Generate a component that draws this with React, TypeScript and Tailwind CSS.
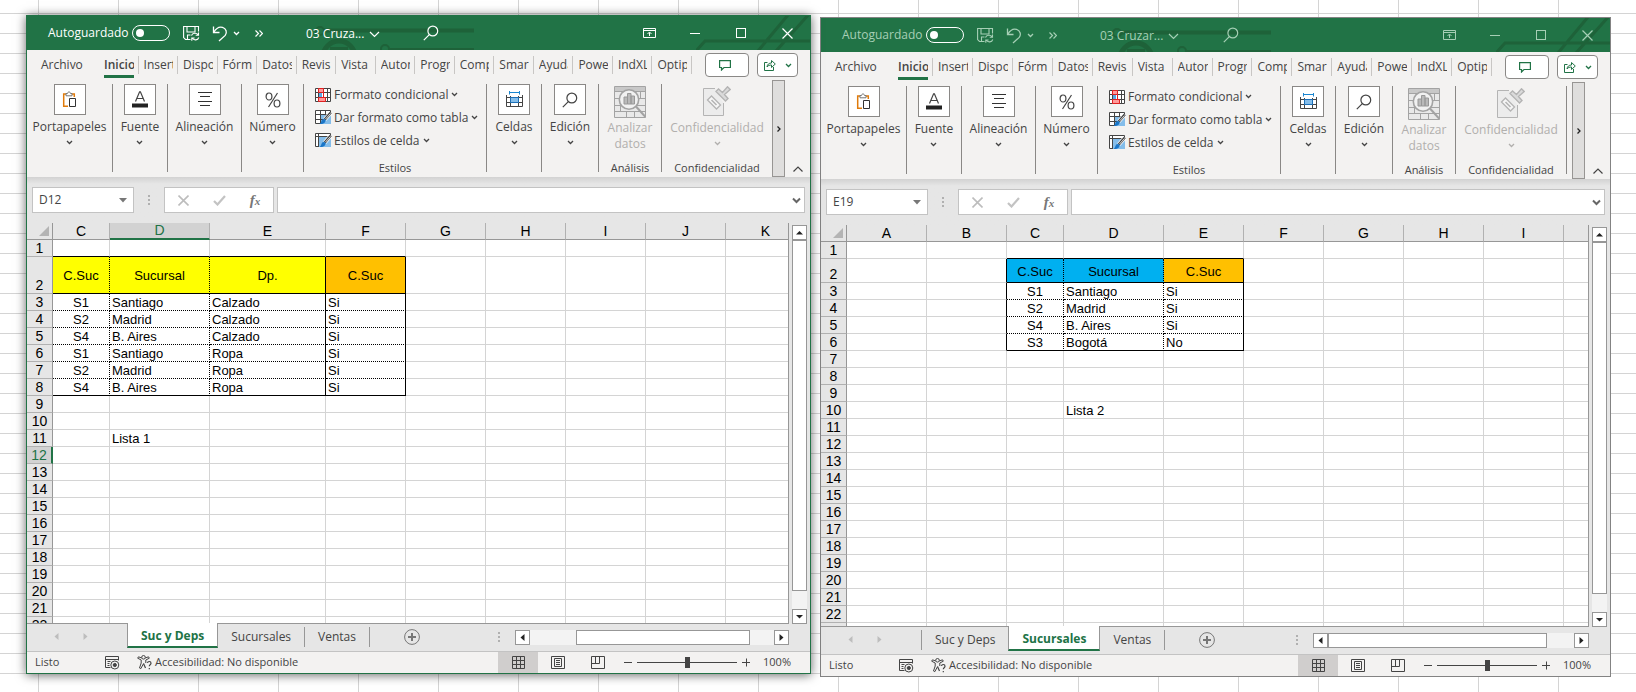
import React from "react";

type Column = { name: string; width: number };

type Block = {
  firstCol: number;
  headers: string[];
  headerColors: string[];
  solidRight: boolean[];
  rows: string[][];
};

type Book = {
  title: string;
  active: boolean;
  cellRef: string;
  columns: Column[];
  rowCount: number;
  headerHeight: number;
  block: Block;
  note: { row: number; col: number; text: string };
  selected?: { row: number; col: number };
  sheets: string[];
  currentSheet: string;
  thumb: { left: number; width: number };
};

const ribbonTabs = [
  "Inicio",
  "Insert",
  "Dispo",
  "Fórm",
  "Datos",
  "Revis",
  "Vista",
  "Autom",
  "Progr",
  "Comp",
  "Smar",
  "Ayuda",
  "Powe",
  "IndXL",
  "Optip",
];

const books: Book[] = [
  {
    title: "03 Cruza...",
    active: true,
    cellRef: "D12",
    columns: [
      { name: "C", width: 57 },
      { name: "D", width: 100 },
      { name: "E", width: 116 },
      { name: "F", width: 80 },
      { name: "G", width: 80 },
      { name: "H", width: 80 },
      { name: "I", width: 80 },
      { name: "J", width: 80 },
      { name: "K", width: 80 },
    ],
    rowCount: 22,
    headerHeight: 37,
    block: {
      firstCol: 0,
      headers: ["C.Suc", "Sucursal", "Dp.", "C.Suc"],
      headerColors: ["bg-[#ffff00]", "bg-[#ffff00]", "bg-[#ffff00]", "bg-[#ffc000]"],
      solidRight: [false, false, true, true],
      rows: [
        ["S1", "Santiago", "Calzado", "Si"],
        ["S2", "Madrid", "Calzado", "Si"],
        ["S4", "B. Aires", "Calzado", "Si"],
        ["S1", "Santiago", "Ropa", "Si"],
        ["S2", "Madrid", "Ropa", "Si"],
        ["S4", "B. Aires", "Ropa", "Si"],
      ],
    },
    note: { row: 11, col: 1, text: "Lista 1" },
    selected: { row: 12, col: 1 },
    sheets: ["Suc y Deps", "Sucursales", "Ventas"],
    currentSheet: "Suc y Deps",
    thumb: { left: 19, width: 71 },
  },
  {
    title: "03 Cruzar...",
    active: false,
    cellRef: "E19",
    columns: [
      { name: "A", width: 80 },
      { name: "B", width: 80 },
      { name: "C", width: 57 },
      { name: "D", width: 100 },
      { name: "E", width: 80 },
      { name: "F", width: 80 },
      { name: "G", width: 80 },
      { name: "H", width: 80 },
      { name: "I", width: 80 },
      { name: "", width: 80 },
    ],
    rowCount: 23,
    headerHeight: 24,
    block: {
      firstCol: 2,
      headers: ["C.Suc", "Sucursal", "C.Suc"],
      headerColors: ["bg-[#00b0f0]", "bg-[#00b0f0]", "bg-[#ffc000]"],
      solidRight: [false, false, true],
      rows: [
        ["S1", "Santiago", "Si"],
        ["S2", "Madrid", "Si"],
        ["S4", "B. Aires", "Si"],
        ["S3", "Bogotá", "No"],
      ],
    },
    note: { row: 10, col: 3, text: "Lista 2" },
    sheets: ["Suc y Deps", "Sucursales", "Ventas"],
    currentSheet: "Sucursales",
    thumb: { left: 0, width: 89 },
  },
];

/* ---------- icons ---------- */

const Caret: React.FC<{ className?: string }> = ({ className = "" }) => (
  <svg width="7" height="5" viewBox="0 0 7 5" fill="none" stroke="currentColor" strokeWidth="1.3" className={`shrink-0 ${className}`}>
    <path d="M1 1l2.5 2.5L6 1" />
  </svg>
);

const WideCaret: React.FC = () => (
  <svg width="11" height="7" viewBox="0 0 11 7" fill="none" stroke="currentColor" strokeWidth="1.2">
    <path d="M1 1l4.5 4.5L10 1" />
  </svg>
);

const SaveIcon: React.FC = () => (
  <svg width="17" height="17" viewBox="0 0 17 17" fill="none" stroke="currentColor" strokeWidth="1.1">
    <path d="M7.5 14.5H2.5L.6 12.6V1.5h14.9v5" />
    <path d="M4 1.5v5.5h8V1.5M4.5 14.5v-4.5h3" />
    <path d="M8.5 10.5c1-2.6 5-3 6.600-.6M15.500 7.500v2.800h-2.800M15.800 12.500c-1 2.800-4.800 3.200-6.500.8M8.800 15.800v-2.800h2.800" />
  </svg>
);

const UndoIcon: React.FC = () => (
  <svg width="16" height="17" viewBox="0 0 16 17" fill="none" stroke="currentColor" strokeWidth="1.3">
    <path d="M1.500 1.500v6h6" />
    <path d="M1.700 7.300C4 3.500 7.500 1.500 10.500 2.400c3.800 1.100 4.900 5.100 2.700 8L7 16" />
  </svg>
);

const SearchIcon: React.FC = () => (
  <svg width="16" height="16" viewBox="0 0 16 16" fill="none" stroke="currentColor" strokeWidth="1.2">
    <circle cx="9.800" cy="6" r="4.900" />
    <path d="M6.300 9.600L.800 15.200" />
  </svg>
);

const PasteIcon: React.FC = () => (
  <svg width="16" height="17" viewBox="0 0 16 17" fill="none">
    <path d="M4 3H1.700v12.300H6M10 3h2.300v3" stroke="#e07b0b" strokeWidth="1.500" />
    <path d="M4 4.800V2.500h1.500C5.700.4 8.300.4 8.500 2.500H10v2.300z" fill="#fff" stroke="#777" />
    <path d="M7.500 7.500h6v8h-6z" fill="#fff" stroke="#333" />
  </svg>
);

const FontIcon: React.FC = () => (
  <svg width="18" height="17" viewBox="0 0 18 17" fill="none">
    <path d="M4.500 10.500L8.600.8h.8l4.100 9.700M6 7.500h6" stroke="#444" strokeWidth="1.200" />
    <path d="M1 12.500h16v4H1z" fill="#222" />
  </svg>
);

const AlignIcon: React.FC = () => (
  <svg width="14" height="15" viewBox="0 0 14 15" stroke="#333">
    <path d="M0 .5h14M2 4.500h10M0 9.500h14M2 13.500h10" />
  </svg>
);

const PercentIcon: React.FC = () => (
  <svg width="16" height="16" viewBox="0 0 16 16" fill="none" stroke="#444" strokeWidth="1.200">
    <ellipse cx="4" cy="4.500" rx="2.900" ry="3.500" />
    <ellipse cx="12" cy="11.500" rx="2.900" ry="3.500" />
    <path d="M12.500 1L3.500 15" />
  </svg>
);

const CellsIcon: React.FC = () => (
  <svg width="17" height="17" viewBox="0 0 17 17" fill="none">
    <path d="M3.500 1.500h10M3.500 0v3.500M13.500 0v3.500" stroke="#1a86d0" />
    <path d="M.5 4v11.500h16V4M.5 6.500h16M.5 11.500h16M4.500 5v10.500M12.500 5v10.500" stroke="#444" />
    <path d="M4.500 6.500h8v5h-8z" fill="#84bdea" stroke="#1a6fb8" />
  </svg>
);

const ConditionalIcon: React.FC = () => (
  <svg width="16" height="14" viewBox="0 0 16 14" fill="none">
    <path d="M.5.5h15v13H.5zM.5 4.500h15M.5 9.500h15M3.500.5v13M12.500.5v13" fill="#fff" stroke="#444" />
    <path d="M3.500.5h5v4h-5zM3.500 9.500h7v4h-7z" fill="#ff9a9a" stroke="#e02020" />
    <path d="M4 5h3v4H4z" fill="#5aa9e6" />
    <path d="M8.500 4.500v5" stroke="#e02020" />
  </svg>
);

const TableFormatIcon: React.FC<{ full?: boolean }> = ({ full }) => (
  <svg width="17" height="15" viewBox="0 0 17 15" fill="none">
    <path d="M.5.5h15v13H.5z" fill="#fff" stroke="#444" />
    {full ? <path d="M4 4h12v10H4z" fill="#84bdea" /> : <path d="M6 5h10v9H6z" fill="#84bdea" />}
    {full ? <path d="M.5 3.500h15M3.500.5v13" stroke="#444" /> : <path d="M.5 4.500h15M.5 9.500h8M5.500.5v13M10.500.5v5" stroke="#444" />}
    <path d="M15.800 2.500l-6 7" stroke="#fff" strokeWidth="4" />
    <path d="M15.800 2.500l-6 7" stroke="#444" strokeWidth="2.600" />
    <path d="M15.500 3.500l-5 5.500" stroke="#ddd" />
    <path d="M10.500 9.500c.5 3-2 5-6 4.500 2-1 1.500-4 3.500-5z" fill="#1a76c8" />
  </svg>
);

const AnalyzeIcon: React.FC = () => (
  <svg width="32" height="32" viewBox="0 0 32 32" fill="none" stroke="#a3a3a3">
    <path d="M.5.5h31v31H.5z" fill="#e9e9e9" />
    <path d="M1 1h30v4H1z" fill="#c8c8c8" stroke="none" />
    <path d="M.5 5.500h31M.5 12.500h31M.5 19.500h31M.5 25.500h31M6.500 19v7M12.500 25v6M20.500 25v6M26.500 5v7" />
    <circle cx="15" cy="13.500" r="9.700" fill="#f1f1f1" strokeWidth="1.600" />
    <path d="M10 11h3.500v7H10zM13.500 7.500h3.500V18h-3.500zM17 10h3.500v8H17z" fill="#b9b9b9" stroke="#989898" />
    <path d="M22 20.500l9.500 10.500" strokeWidth="2" />
  </svg>
);

const SensitivityIcon: React.FC = () => (
  <svg width="28" height="31" viewBox="0 0 28 31" fill="none" stroke="#b4b4b4">
    <path d="M12 2.500H.5v27h20V17" fill="#ececec" />
    <path d="M4.500 14l4-4 9 9-4 4z" fill="#f6f6f6" strokeWidth="1.300" />
    <path d="M8.500 14l5 5" strokeWidth="1.600" />
    <path d="M13 5.500l2.500-2.500 4 3.500L24.500.8l2.700 2.700-5.700 5 3.500 4-2.500 2.500z" fill="#dadada" strokeWidth="1.400" />
  </svg>
);

const MacroIcon: React.FC = () => (
  <svg width="15" height="14" viewBox="0 0 15 14" fill="none" stroke="#444">
    <path d="M5.500 11.500h-5V.5h13v4M.5 3.500h13M2.500 5.500h3M2.500 7.500h2M2.500 9.500h2" />
    <circle cx="9.800" cy="9" r="4" />
    <circle cx="9.800" cy="9" r="1.600" fill="#444" />
  </svg>
);

const AccessIcon: React.FC = () => (
  <svg width="16" height="15" viewBox="0 0 16 15" fill="none" stroke="#444">
    <circle cx="6.500" cy="2.300" r="1.800" />
    <path d="M4.700 3L1.500 1.800.7 3.200l3.500 1.800v3L2.500 13l1.300.7 2.700-5M8.300 3l3.200-1.200.8 1.400-3.500 1.800v3" />
    <path d="M6.500 8.500L8.500 13M10.500 8c.2-2 3.500-2 3.500.2 0 1.500-1.700 1.500-1.700 3M12.300 13v1.300" strokeWidth="1.200" />
  </svg>
);

const Arrow: React.FC<{ d: string }> = ({ d }) => (
  <svg width="7" height="7" viewBox="0 0 7 7" fill="currentColor">
    <path d={d} />
  </svg>
);

const ARROW_UP = "M0 5.500L3.500 2 7 5.500z";
const ARROW_DOWN = "M0 2l3.500 3.500L7 2z";
const ARROW_LEFT = "M5.500 0L1.500 3.500l4 3.500z";
const ARROW_RIGHT = "M1.500 0l4 3.500-4 3.500z";

const Dots: React.FC = () => (
  <svg width="2" height="11" viewBox="0 0 2 11" fill="#b0b0b0" className="shrink-0">
    <path d="M0 0h2v2H0zM0 4h2v2H0zM0 8h2v2H0z" />
  </svg>
);

/* ---------- window parts ---------- */

const TitleBar: React.FC<{ book: Book }> = ({ book }) => (
  <header
    className={`relative flex h-[34px] shrink-0 items-center overflow-hidden bg-[#217346] pl-[21px] text-[12px] ${
      book.active ? "text-white" : "text-[#a6cfb5]"
    }`}
  >
    <svg width="162" height="34" viewBox="0 0 162 34" fill="none" stroke="#1e6239" className="absolute top-0 left-1/2 -ml-[107px]">
      <circle cx="8" cy="15" r="4" strokeWidth="2" />
      <path d="M12 14.500h150" strokeWidth="4" />
      <circle cx="27" cy="41" r="16" strokeWidth="5" />
      <path d="M18 33h18" strokeWidth="4" />
      <circle cx="73" cy="33" r="4" strokeWidth="2" />
      <path d="M77 33h85" strokeWidth="2" />
    </svg>
    <svg width="114" height="34" viewBox="0 0 114 34" fill="none" stroke="#1e6239" strokeWidth="3" className="absolute top-0 right-0">
      <path d="M0 35l9-10h105M62 35L92-1M80 35L114-3" />
    </svg>
    <label className="relative flex items-center">
      <span className="w-[84px]">Autoguardado</span>
      <input
        type="checkbox"
        className="h-[16px] w-[38px] appearance-none rounded-full border border-white before:mt-[3px] before:ml-[3px] before:block before:size-[8px] before:rounded-full before:bg-white"
      />
    </label>
    <button aria-label="Guardar" className="relative ml-[13px]">
      <SaveIcon />
    </button>
    <button aria-label="Deshacer" className="relative ml-[12px] flex items-center gap-[5px]">
      <UndoIcon />
      <Caret />
    </button>
    <button aria-label="Más comandos" className="relative ml-[15px]">
      <svg width="8" height="7" viewBox="0 0 8 7" fill="none" stroke="currentColor" strokeWidth="1.200">
        <path d="M.5.5l3 3-3 3M4.500.5l3 3-3 3" />
      </svg>
    </button>
    <button className="relative ml-[43px] flex items-center gap-[5px] pt-[2px] whitespace-nowrap">
      {book.title}
      <WideCaret />
    </button>
    <button aria-label="Buscar" className="relative mr-[371px] ml-auto">
      <SearchIcon />
    </button>
    <div className="absolute right-0 flex">
      <button aria-label="Opciones de la cinta" className="flex h-[34px] w-[46px] items-center justify-center">
        <svg width="13" height="11" viewBox="0 0 13 11" fill="none" stroke="currentColor">
          <path d="M.5.5h12v9H.5zM.5 2.500h12M6.500 8V4.500M4.500 6l2-2 2 2" />
        </svg>
      </button>
      <button aria-label="Minimizar" className="flex h-[34px] w-[46px] items-center justify-center">
        <span className="h-px w-[10px] bg-current" />
      </button>
      <button aria-label="Maximizar" className="flex h-[34px] w-[46px] items-center justify-center">
        <span className="size-[10px] border border-current" />
      </button>
      <button aria-label="Cerrar" className="flex h-[34px] w-[46px] items-center justify-center">
        <svg width="11" height="11" viewBox="0 0 11 11" stroke="currentColor" strokeWidth="1.200">
          <path d="M.5.5l10 10M10.500.5l-10 10" />
        </svg>
      </button>
    </div>
  </header>
);

const RibbonTabs: React.FC = () => (
  <nav className="flex h-[30px] shrink-0 items-center pr-[12px] pl-[14px] text-[12px]">
    <button className="w-[58px] shrink-0 text-left">Archivo</button>
    <div className="flex min-w-0 flex-1">
      {ribbonTabs.map((tab, i) => (
        <button key={tab} className="h-[18px] min-w-0 flex-1 border-r border-[#c8c6c4] pr-[4px] pl-[5px] text-left leading-[18px]">
          <span
            className={
              i === 0
                ? "block h-[22px] overflow-hidden border-b-3 border-[#217346] font-semibold whitespace-nowrap"
                : "block overflow-hidden whitespace-nowrap"
            }
          >
            {tab}
          </span>
        </button>
      ))}
    </div>
    <button
      aria-label="Comentarios"
      className="ml-[13px] flex h-[24px] w-[44px] shrink-0 items-center justify-center rounded border border-[#8a8886] bg-white pr-[4px]"
    >
      <svg width="12" height="11" viewBox="0 0 12 11" fill="none" stroke="#217346" strokeWidth="1.200">
        <path d="M.6.6h10.800v6.900H5l-2.500 2.500V7.500H.6z" />
      </svg>
    </button>
    <button
      aria-label="Compartir"
      className="ml-[8px] flex h-[24px] w-[41px] shrink-0 items-center justify-center gap-[9px] rounded border border-[#8a8886] bg-white text-[#217346]"
    >
      <svg width="12" height="12" viewBox="0 0 12 12" fill="none" stroke="currentColor">
        <path d="M3.500 3.500h-3v8h9V8M3 8c.3-2.700 2-4 4.500-4V1.500L11.300 5 7.500 8.500V6C5.500 6 4 6.500 3 8z" />
      </svg>
      <Caret />
    </button>
  </nav>
);

const IconGroup: React.FC<{ label: string; width: string; children: React.ReactNode }> = ({ label, width, children }) => (
  <div className={`flex h-[88px] shrink-0 flex-col items-center border-r border-[#8a8886] ${width}`}>
    <button className="flex flex-col items-center">
      <span className="flex h-[31px] w-[32px] items-center justify-center border border-[#8a8886] bg-white">{children}</span>
      <span className="mt-[3px] leading-[18px]">{label}</span>
      <Caret className="mt-[4px]" />
    </button>
  </div>
);

const Ribbon: React.FC = () => (
  <section className="flex h-[97px] shrink-0 text-[12px]">
    <div className="flex min-w-0 flex-1 overflow-hidden pt-[4px]">
      <IconGroup label="Portapapeles" width="w-[86px]">
        <PasteIcon />
      </IconGroup>
      <IconGroup label="Fuente" width="w-[55px]">
        <FontIcon />
      </IconGroup>
      <IconGroup label="Alineación" width="w-[74px]">
        <AlignIcon />
      </IconGroup>
      <IconGroup label="Número" width="w-[62px]">
        <PercentIcon />
      </IconGroup>
      <div className="flex h-[88px] w-[183px] shrink-0 flex-col border-r border-[#8a8886]">
        <div className="-mt-px flex flex-col items-start pl-[11px]">
          <button className="flex h-[23px] items-center whitespace-nowrap">
            <ConditionalIcon />
            <span className="mr-[3px] ml-[3px]">Formato condicional</span>
            <Caret />
          </button>
          <button className="flex h-[23px] items-center whitespace-nowrap">
            <TableFormatIcon />
            <span className="mr-[3px] ml-[2px]">Dar formato como tabla</span>
            <Caret />
          </button>
          <button className="flex h-[23px] items-center whitespace-nowrap">
            <TableFormatIcon full />
            <span className="mr-[3px] ml-[2px]">Estilos de celda</span>
            <Caret />
          </button>
        </div>
        <span className="mt-auto text-center text-[11px] leading-[9px]">Estilos</span>
      </div>
      <IconGroup label="Celdas" width="w-[55px]">
        <CellsIcon />
      </IconGroup>
      <IconGroup label="Edición" width="w-[57px]">
        <SearchIcon />
      </IconGroup>
      <div className="flex h-[88px] w-[63px] shrink-0 flex-col items-center border-r border-[#8a8886] pt-[2px]">
        <button disabled className="flex flex-col items-center text-[#b1afad]">
          <AnalyzeIcon />
          <span className="mt-[2px] leading-[16px]">
            Analizar
            <br />
            datos
          </span>
        </button>
        <span className="mt-auto text-[11px] leading-[9px]">Análisis</span>
      </div>
      <div className="flex h-[88px] w-[111px] shrink-0 flex-col items-center border-r border-[#8a8886] pt-[2px]">
        <button disabled className="flex flex-col items-center text-[#b1afad]">
          <SensitivityIcon />
          <span className="mt-[3px] leading-[16px]">Confidencialidad</span>
          <Caret className="mt-[5px]" />
        </button>
        <span className="mt-auto text-[11px] leading-[9px]">Confidencialidad</span>
      </div>
    </div>
    <button
      aria-label="Más grupos"
      className="flex w-[13px] shrink-0 items-center justify-center border border-[#979593] bg-[#dfdedd]"
    >
      <svg width="4" height="6" viewBox="0 0 4 6" fill="none" stroke="#222" strokeWidth="1.300">
        <path d="M.5.5L3 3 .5 5.500" />
      </svg>
    </button>
    <button aria-label="Contraer la cinta" className="flex w-[25px] shrink-0 items-end justify-center pb-[5px]">
      <svg width="10" height="6" viewBox="0 0 10 6" fill="none" stroke="#444" strokeWidth="1.200">
        <path d="M.5 5.500L5 1l4.500 4.500" />
      </svg>
    </button>
  </section>
);

const FormulaBar: React.FC<{ cellRef: string }> = ({ cellRef }) => (
  <section className="flex h-[46px] shrink-0 items-start bg-linear-to-b from-[#d2d2d2] to-[#e6e6e6] to-15% px-[5px] pt-[10px]">
    <div className="flex h-[26px] w-[102px] shrink-0 items-center border border-[#c3c3c3] bg-white pr-[6px] text-[#444]">
      <input
        aria-label="Cuadro de nombres"
        defaultValue={cellRef}
        className="w-full min-w-0 bg-transparent pl-[6px] text-[12px] outline-none"
      />
      <svg width="8" height="5" viewBox="0 0 8 5" fill="#777" className="shrink-0">
        <path d="M0 0h8L4 4.500z" />
      </svg>
    </div>
    <div className="flex h-[26px] w-[30px] shrink-0 items-center justify-center">
      <Dots />
    </div>
    <div className="flex h-[26px] w-[110px] shrink-0 items-center border border-[#c3c3c3] bg-white">
      <button aria-label="Cancelar" className="flex flex-1 justify-center">
        <svg width="11" height="11" viewBox="0 0 11 11" stroke="#bdbdbd" strokeWidth="1.600">
          <path d="M.5.5l10 10M10.500.5l-10 10" />
        </svg>
      </button>
      <button aria-label="Introducir" className="flex flex-1 justify-center">
        <svg width="13" height="11" viewBox="0 0 13 11" fill="none" stroke="#c3c3c3" strokeWidth="2.200">
          <path d="M1 6l3.500 3.500L12 1" />
        </svg>
      </button>
      <button
        aria-label="Insertar función"
        className="flex-1 font-['Liberation_Serif',serif] text-[15px] leading-[20px] font-bold text-[#777] italic"
      >
        f<span className="text-[11px]">x</span>
      </button>
    </div>
    <div className="ml-[3px] flex h-[26px] min-w-0 flex-1 items-center border border-[#c3c3c3] bg-white pr-[3px]">
      <input aria-label="Barra de fórmulas" className="w-full min-w-0 bg-transparent px-1 text-[12px] outline-none" />
      <svg width="9" height="7" viewBox="0 0 9 7" fill="none" stroke="#666" strokeWidth="2" className="shrink-0">
        <path d="M1 1.500L4.500 5 8 1.500" />
      </svg>
    </div>
  </section>
);

const cellText = (book: Book, row: number, col: number) => {
  const { block, note } = book;
  if (row === note.row && col === note.col) return note.text;
  const c = col - block.firstCol;
  if (row === 2) return block.headers[c] ?? "";
  return block.rows[row - 3]?.[c] ?? "";
};

const cellClass = (book: Book, row: number, col: number) => {
  const { block } = book;
  const c = col - block.firstCol;
  const lastRow = block.rows.length + 2;
  const insideCols = c >= 0 && c < block.headers.length;
  const insideRows = row >= 2 && row <= lastRow;

  let bottom = "border-b-[#d4d4d4]";
  if (insideCols && (row === 1 || row === 2 || row === lastRow)) bottom = "border-b-black";
  else if (insideCols && insideRows) bottom = "border-b-black [border-bottom-style:dotted]";

  let right = "border-r-[#d4d4d4]";
  if (insideRows && c === -1) right = "border-r-black";
  else if (insideRows && insideCols) {
    right = block.solidRight[c] ? "border-r-black" : "border-r-black [border-right-style:dotted]";
  }

  const fill = insideCols && row === 2 ? block.headerColors[c] : "bg-white";
  const align = insideCols && insideRows && (row === 2 || c === 0) ? "text-center" : "pl-[2px] text-left";
  return `border-r border-b pt-px pr-0 pb-0 align-middle leading-[15px] whitespace-nowrap ${bottom} ${right} ${fill} ${align}`;
};

const Grid: React.FC<{ book: Book }> = ({ book }) => {
  const total = book.columns.reduce((sum, col) => sum + col.width, 26);
  const rows = Array.from({ length: book.rowCount }, (_, i) => i + 1);

  return (
    <section className="flex min-h-0 flex-1 bg-[#e6e6e6] pr-[3px]">
      <div className="min-w-0 flex-1 overflow-hidden border-r border-b border-[#979797]">
        <table
          className="table-fixed border-separate border-spacing-0 font-['Liberation_Sans',Arial,sans-serif] text-[13px] text-black"
          style={{ width: total }}
        >
          <colgroup>
            <col style={{ width: 26 }} />
            {book.columns.map((col, i) => (
              <col key={i} style={{ width: col.width }} />
            ))}
          </colgroup>
          <thead>
            <tr className="h-[17px] text-[14px] leading-[16px]">
              <th className="border-r border-b border-[#979797] bg-[#e6e6e6] p-0">
                <svg width="10" height="10" viewBox="0 0 10 10" fill="#b4b4b4" className="mr-[3px] ml-auto">
                  <path d="M10 0v10H0z" />
                </svg>
              </th>
              {book.columns.map((col, i) => (
                <th
                  key={i}
                  scope="col"
                  className={
                    book.selected?.col === i
                      ? "border-r border-b-2 border-r-[#b1b1b1] border-b-[#217346] bg-[#d2d2d2] p-0 leading-[15px] font-normal text-[#217346]"
                      : "border-r border-b border-r-[#b1b1b1] border-b-[#979797] bg-[#e6e6e6] p-0 font-normal"
                  }
                >
                  {col.name}
                </th>
              ))}
            </tr>
          </thead>
          <tbody>
            {rows.map((row) => (
              <tr key={row} style={{ height: row === 2 ? book.headerHeight : 17 }}>
                <th
                  scope="row"
                  className={
                    book.selected?.row === row
                      ? "border-r-2 border-b border-r-[#217346] border-b-[#b1b1b1] bg-[#d2d2d2] p-0 align-bottom text-[14px] leading-[16px] font-normal text-[#217346]"
                      : "border-r border-b border-r-[#979797] border-b-[#b1b1b1] bg-[#e6e6e6] p-0 align-bottom text-[14px] leading-[16px] font-normal"
                  }
                >
                  {row}
                </th>
                {book.columns.map((_, col) => (
                  <td key={col} className={cellClass(book, row, col)}>
                    {cellText(book, row, col)}
                  </td>
                ))}
              </tr>
            ))}
          </tbody>
        </table>
      </div>
      <div className="ml-[3px] flex w-[15px] shrink-0 flex-col pt-[2px] text-[#222]">
        <button aria-label="Subir" className="flex h-[15px] shrink-0 items-center justify-center border border-[#979797] bg-white">
          <Arrow d={ARROW_UP} />
        </button>
        <div className="min-h-0 flex-1 bg-[#f3f3f3]">
          <div className="h-[95%] border border-[#979797] bg-white" />
        </div>
        <button aria-label="Bajar" className="flex h-[15px] shrink-0 items-center justify-center border border-[#979797] bg-white">
          <Arrow d={ARROW_DOWN} />
        </button>
      </div>
    </section>
  );
};

const SheetTabs: React.FC<{ book: Book }> = ({ book }) => {
  const current = book.sheets.indexOf(book.currentSheet);

  return (
    <section className="flex h-[27px] shrink-0 bg-[#e6e6e6] pr-[21px] text-[12px]">
      <div className="flex h-[25px] w-[100px] shrink-0 items-center gap-[22px] pl-[26px] text-[#bdbdbd]">
        <button aria-label="Hoja anterior">
          <Arrow d={ARROW_LEFT} />
        </button>
        <button aria-label="Hoja siguiente">
          <Arrow d={ARROW_RIGHT} />
        </button>
      </div>
      {current > 0 && <span className="mt-[3px] h-[20px] w-px bg-[#979797]" />}
      {book.sheets.map((sheet, i) =>
        i === current ? (
          <button
            key={sheet}
            className="-mt-px h-[25px] shrink-0 border-x border-b-2 border-x-[#979797] border-b-[#217346] bg-white px-[13px] pt-[3px] leading-[20px] font-bold whitespace-nowrap text-[#217346]"
          >
            {sheet}
          </button>
        ) : (
          <button
            key={sheet}
            className={`mt-[3px] h-[20px] shrink-0 px-[13px] leading-[18px] whitespace-nowrap ${
              i + 1 === current ? "" : "border-r border-[#979797]"
            }`}
          >
            {sheet}
          </button>
        ),
      )}
      <button aria-label="Hoja nueva" className="mt-[5px] ml-[34px] size-[16px] shrink-0">
        <svg width="16" height="16" viewBox="0 0 16 16" fill="none" stroke="#777">
          <circle cx="8" cy="8" r="7.400" />
          <path d="M8 4v8M4 8h8" strokeWidth="2" />
        </svg>
      </button>
      <div className="mt-[8px] mr-[15px] ml-auto">
        <Dots />
      </div>
      <div className="mt-[6px] flex h-[15px] w-[36%] shrink-0 text-[#222]">
        <button aria-label="Izquierda" className="flex w-[15px] shrink-0 items-center justify-center border border-[#979797] bg-white">
          <Arrow d={ARROW_LEFT} />
        </button>
        <div className="min-w-0 flex-1 bg-[#f3f3f3]">
          <div
            className="h-full border border-[#979797] bg-white"
            style={{ marginLeft: `${book.thumb.left}%`, width: `${book.thumb.width}%` }}
          />
        </div>
        <button aria-label="Derecha" className="flex w-[15px] shrink-0 items-center justify-center border border-[#979797] bg-white">
          <Arrow d={ARROW_RIGHT} />
        </button>
      </div>
    </section>
  );
};

const StatusBar: React.FC = () => (
  <footer className="flex h-[22px] shrink-0 items-center border-t border-[#c3c3c3] bg-[#f3f2f1] pr-[19px] pl-[8px] text-[11px]">
    <span className="w-[70px] shrink-0">Listo</span>
    <button aria-label="Grabar macro" className="w-[32px] shrink-0">
      <MacroIcon />
    </button>
    <button className="flex items-center gap-[2px] whitespace-nowrap">
      <AccessIcon />
      Accesibilidad: No disponible
    </button>
    <div className="ml-auto flex h-full shrink-0 items-center">
      <button aria-label="Normal" className="flex h-full w-[40px] items-center justify-center bg-[#d0cecd]">
        <svg width="13" height="13" viewBox="0 0 13 13" fill="none" stroke="#444">
          <path d="M.5.5h12v12H.5zM.5 4.500h12M.5 8.500h12M4.500.5v12M8.500.5v12" />
        </svg>
      </button>
      <button aria-label="Diseño de página" className="flex h-full w-[40px] items-center justify-center">
        <svg width="14" height="13" viewBox="0 0 14 13" fill="none" stroke="#444">
          <path d="M.5.5h13v12H.5zM3.500 2.500h7v8h-7zM5 4.500h4M5 6.500h4M5 8.500h4" />
        </svg>
      </button>
      <button aria-label="Vista previa de salto de página" className="flex h-full w-[40px] items-center justify-center">
        <svg width="14" height="13" viewBox="0 0 14 13" fill="none" stroke="#444">
          <path d="M.5.5h13v12H.5zM.5 7.500h8v-7M4.500.5v7" />
        </svg>
      </button>
      <button aria-label="Alejar" className="ml-[6px] flex h-full w-[8px] items-center">
        <span className="h-px w-full bg-[#444]" />
      </button>
      <input
        type="range"
        aria-label="Zoom"
        className="mx-[5px] h-[11px] w-[100px] appearance-none bg-[linear-gradient(#444,#444)] bg-[length:100%_1px] bg-center bg-no-repeat [&::-webkit-slider-thumb]:h-[11px] [&::-webkit-slider-thumb]:w-[5px] [&::-webkit-slider-thumb]:appearance-none [&::-webkit-slider-thumb]:bg-[#444]"
      />
      <button aria-label="Acercar" className="flex h-full w-[8px] items-center">
        <svg width="8" height="9" viewBox="0 0 8 9" stroke="#444">
          <path d="M0 4.500h8M4.500 .5v8" />
        </svg>
      </button>
      <span className="w-[41px] text-right">100%</span>
    </div>
  </footer>
);

const BookWindow: React.FC<{ book: Book }> = ({ book }) => (
  <article
    className={`flex min-w-0 flex-col border bg-[#f3f2f1] text-[#444] ${
      book.active
        ? "z-10 mb-[3px] flex-[785] border-[#217346] shadow-[0_1px_10px_rgba(0,0,0,0.6)]"
        : "mt-[2px] flex-[791] border-[#838383]"
    }`}
  >
    <TitleBar book={book} />
    <RibbonTabs />
    <Ribbon />
    <FormulaBar cellRef={book.cellRef} />
    <Grid book={book} />
    <SheetTabs book={book} />
    <StatusBar />
  </article>
);

const App: React.FC = () => {
  return (
    <main className="flex h-screen min-h-[520px] gap-[9px] overflow-hidden bg-white bg-[linear-gradient(to_right,#d4d4d4_1px,transparent_1px),linear-gradient(to_bottom,#d4d4d4_1px,transparent_1px)] bg-[size:80px_20px] bg-[position:38px_13px] pt-[15px] pr-[25px] pb-[15px] pl-[26px] font-['Open_Sans','Noto_Sans',sans-serif]">
      {books.map((book) => (
        <BookWindow key={book.cellRef} book={book} />
      ))}
    </main>
  );
};

export default App;
